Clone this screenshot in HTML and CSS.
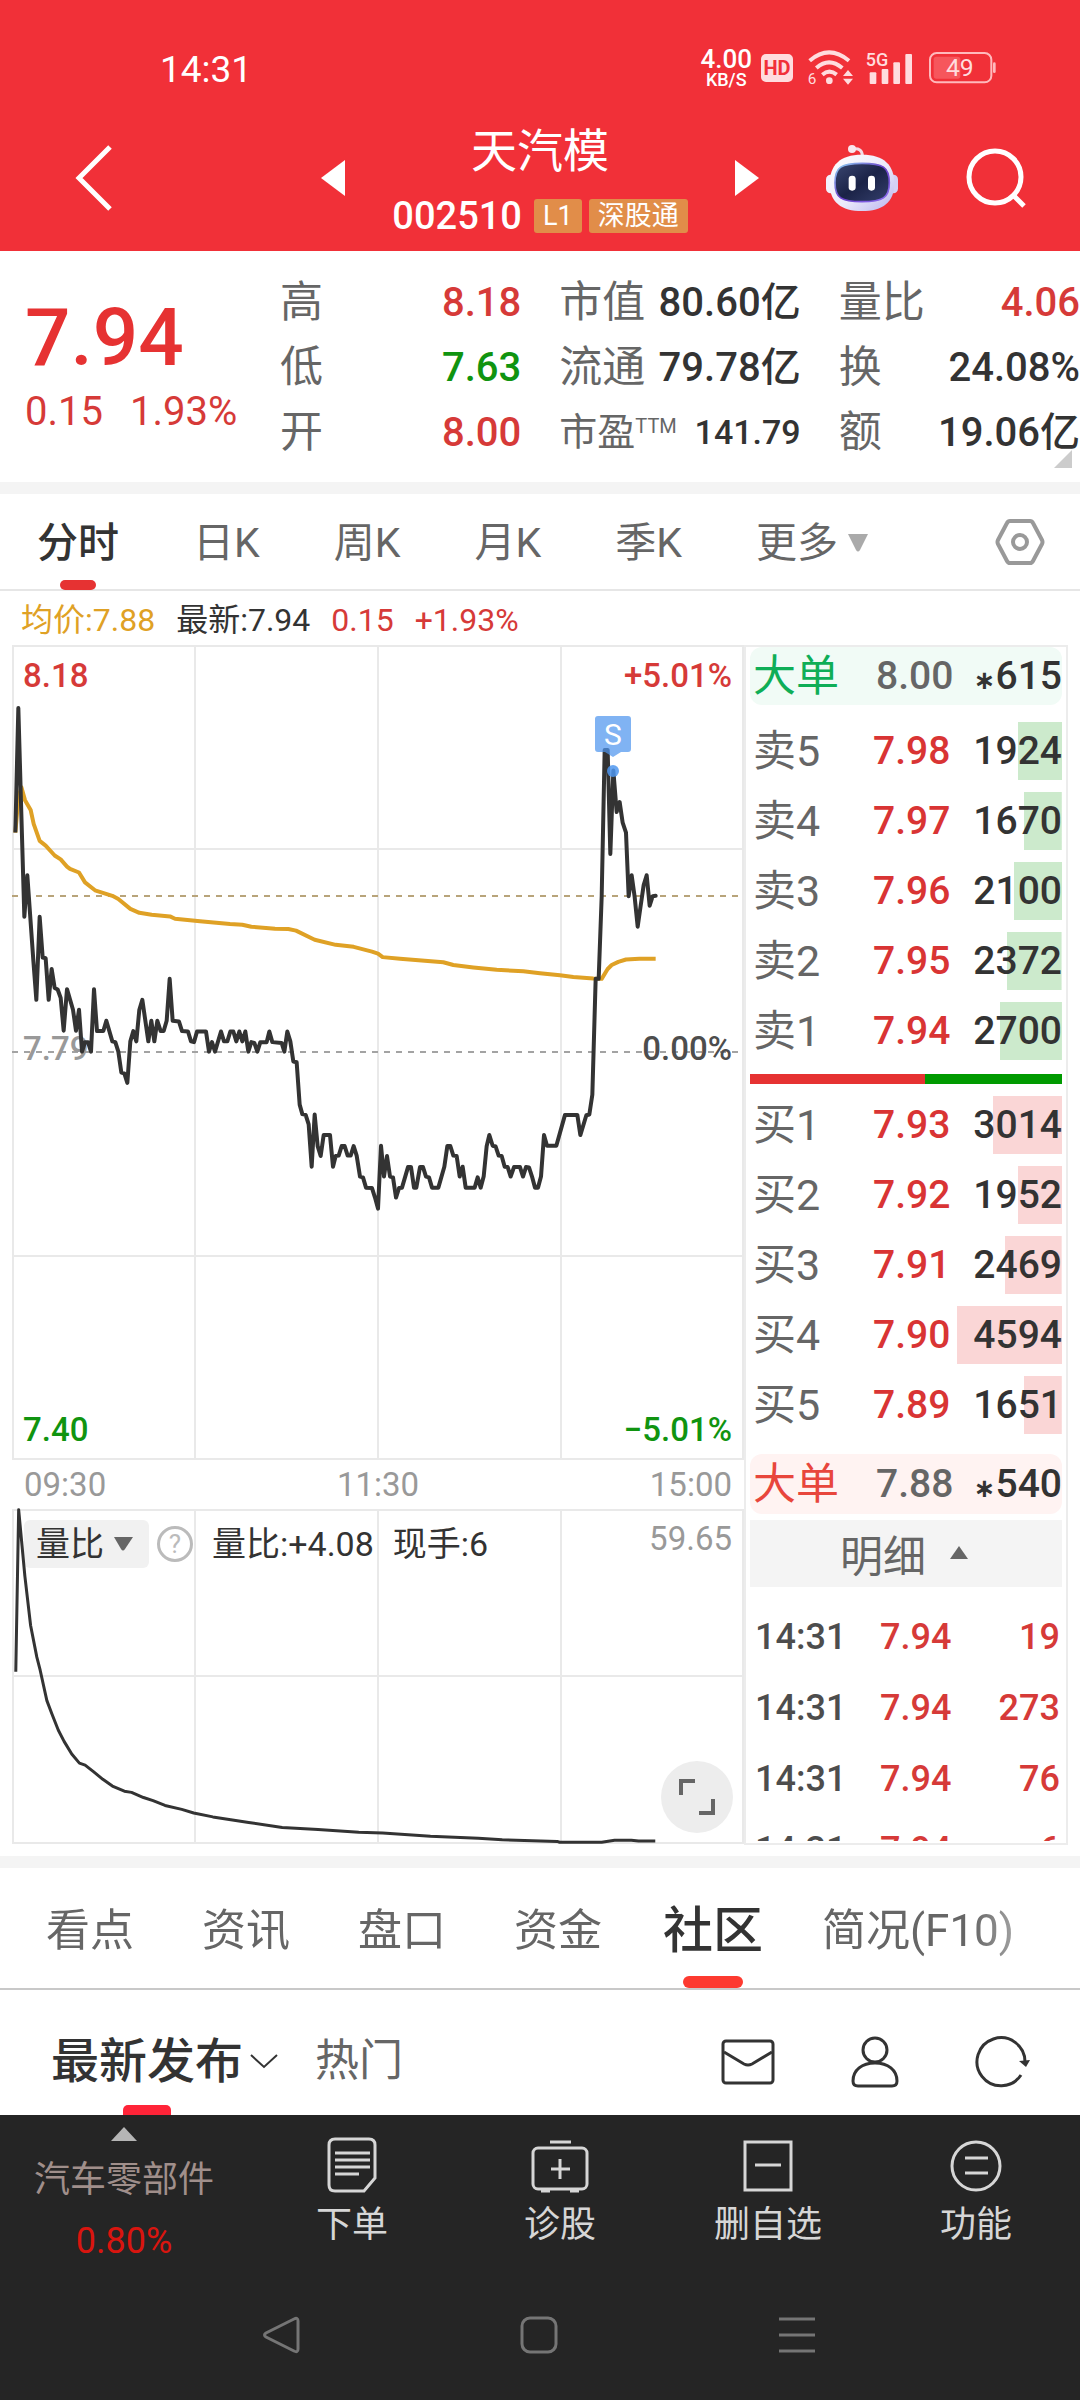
FILE: index.html
```html
<!DOCTYPE html>
<html lang="zh-CN">
<head>
<meta charset="utf-8">
<meta name="viewport" content="width=device-width">
<title>天汽模 002510</title>
<link rel="stylesheet" href="styles.css">
</head>
<body>
<header class="top">
  <div class="status">
    <span class="clock">14:31</span>
    <div class="status-icons">
      <span class="speed"><b>4.00</b><small>KB/S</small></span>
      <span class="hd">HD</span>
      <svg class="wifi" width="46" height="36" viewBox="0 0 138 108" fill="none" stroke="#ffdcde" stroke-width="12">
        <path d="M8 32Q66-18 126 32M28 54Q66 20 106 54M46 74Q67 56 89 74"/>
        <circle cx="67" cy="92" r="10" fill="#ffdcde" stroke="none"/>
        <path d="M108 78l15-18 15 18zM108 86l15 18 15-18z" fill="#ffdcde" stroke="none"/>
        <text x="2" y="103" font-size="46" fill="#ffdcde" stroke="none">6</text>
      </svg>
      <svg class="signal" width="48" height="34" viewBox="0 0 144 102" fill="#ffdcde">
        <rect x="11" y="64" width="20" height="35" rx="3"/><rect x="47" y="54" width="20" height="45" rx="3"/><rect x="82" y="34" width="20" height="65" rx="3"/><rect x="118" y="9" width="20" height="90" rx="3"/>
        <text x="-1" y="46" font-size="54" font-weight="500">5G</text>
      </svg>
      <svg class="battery" width="68" height="32" viewBox="0 0 204 96">
        <rect x="3" y="3" width="184" height="88" rx="20" fill="none" stroke="#ffb9bc" stroke-width="6"/>
        <rect x="14" y="14" width="80" height="66" rx="8" fill="#f6565c"/>
        <rect x="192" y="31" width="8" height="32" rx="4" fill="#ffb9bc"/>
        <text x="51" y="73" font-size="74" fill="#ffdcde">49</text>
      </svg>
    </div>
  </div>
  <div class="titlebar">
    <div class="side side-left">
      <button class="icon-btn" aria-label="返回"><svg width="38" height="66" viewBox="0 0 38 66" fill="none" stroke="#fff" stroke-width="5"><path d="M35 2L4 33l31 31"/></svg></button>
      <button class="icon-btn" aria-label="上一只"><svg width="24" height="36" viewBox="0 0 24 36"><path d="M24 0v36L0 18z" fill="#fff"/></svg></button>
    </div>
    <div class="stock">
      <h1>天汽模</h1>
      <p class="code"><span>002510</span><span class="tag">L1</span><span class="tag">深股通</span></p>
    </div>
    <div class="side side-right">
      <button class="icon-btn" aria-label="下一只"><svg width="24" height="36" viewBox="0 0 24 36"><path d="M0 0v36l24-18z" fill="#fff"/></svg></button>
      <button class="icon-btn" aria-label="智能助手">
        <svg width="74" height="68" viewBox="432 336 222 204">
          <defs>
            <linearGradient id="shell" x1="0" y1="0" x2="1" y2="1"><stop offset="0" stop-color="#fff"/><stop offset=".55" stop-color="#ebe9fa"/><stop offset="1" stop-color="#b9b4ee"/></linearGradient>
            <linearGradient id="face" x1="0" y1="0" x2="1" y2="1"><stop offset="0" stop-color="#3a4671"/><stop offset=".5" stop-color="#1b2347"/><stop offset="1" stop-color="#343f6c"/></linearGradient>
            <linearGradient id="rim" x1="0" y1="0" x2="1" y2="1"><stop offset="0" stop-color="#8fd6f5"/><stop offset=".5" stop-color="#6b3fc9"/><stop offset="1" stop-color="#8b6df0"/></linearGradient>
          </defs>
          <path d="M514 351Q544 346 544 372" fill="none" stroke="#f3dbe6" stroke-width="9"/>
          <circle cx="513" cy="351" r="12" fill="#f9e6ee"/>
          <rect x="435" y="428" width="30" height="56" rx="14" fill="#f2f0fc"/><rect x="621" y="428" width="30" height="56" rx="14" fill="#d5d0f4"/>
          <path d="M543 368C610 368 640 400 640 455C640 510 605 537 543 537C481 537 446 510 446 455C446 400 476 368 543 368Z" fill="url(#shell)"/>
          <path d="M543 394C605 394 625 405 625 452C625 498 605 509 543 509C481 509 462 498 462 452C462 405 481 394 543 394Z" fill="url(#face)" stroke="url(#rim)" stroke-width="5"/>
          <rect x="503" y="431" width="21" height="45" rx="10" fill="#fff"/><rect x="561" y="431" width="21" height="45" rx="10" fill="#fff"/>
        </svg>
      </button>
      <button class="icon-btn" aria-label="搜索"><svg width="62" height="62" viewBox="0 0 62 62" fill="none" stroke="#fff" stroke-width="5"><circle cx="30" cy="30" r="26"/><path d="M49 49l10 10"/></svg></button>
    </div>
  </div>
</header>

<main>
  <section class="quote">
    <div class="last">
      <strong>7.94</strong>
      <p><span>0.15</span><span>1.93%</span></p>
    </div>
    <dl class="stats">
      <div><dt>高</dt><dd class="up">8.18</dd></div>
      <div><dt>低</dt><dd class="down">7.63</dd></div>
      <div><dt>开</dt><dd class="up">8.00</dd></div>
    </dl>
    <dl class="stats">
      <div><dt>市值</dt><dd>80.60亿</dd></div>
      <div><dt>流通</dt><dd>79.78亿</dd></div>
      <div class="small"><dt>市盈<sup>TTM</sup></dt><dd>141.79</dd></div>
    </dl>
    <dl class="stats">
      <div><dt>量比</dt><dd class="up">4.06</dd></div>
      <div><dt>换</dt><dd>24.08%</dd></div>
      <div><dt>额</dt><dd>19.06亿</dd></div>
    </dl>
    <svg class="corner" width="18" height="18" viewBox="0 0 18 18"><path d="M18 0v18H0z" fill="#ccc"/></svg>
  </section>

  <nav class="periods">
    <a href="#" class="active">分时</a><a href="#">日K</a><a href="#">周K</a><a href="#">月K</a><a href="#">季K</a>
    <a href="#" class="more">更多<svg width="22" height="18" viewBox="0 0 22 18"><path d="M1 0h20L13 16q-2 3-4 0z" fill="#aaa"/></svg></a>
    <button class="icon-btn settings" aria-label="设置"><svg width="50" height="48" viewBox="0 0 50 48" fill="none" stroke="#999" stroke-width="4"><path d="M15 3h20q2 0 3 2l9 17q1 2 0 4l-9 17q-1 2-3 2H15q-2 0-3-2L3 26q-1-2 0-4l9-17q1-2 3-2z"/><circle cx="25" cy="24" r="7"/></svg></button>
  </nav>

  <p class="legend"><span class="avg">均价:7.88</span><span>最新:7.94</span><span class="up">0.15</span><span class="up">+1.93%</span></p>

  <div class="board">
    <div class="charts">
      <figure class="price-chart">
        <svg class="plot" viewBox="12 645 732 815" preserveAspectRatio="none" fill="none">
          <path d="M13 646H743V1459H13ZM195 646V1459M378 646V1459M561 646V1459M13 849H743M13 1256H743" stroke="#e9e9e9" stroke-width="2"/>
          <path d="M12 896H740" stroke="#b8a47a" stroke-width="2" stroke-dasharray="6 6"/>
          <path d="M12 1052H740" stroke="#a3a3a3" stroke-width="2" stroke-dasharray="6 6"/>
        </svg>
        <span class="lab tl up">8.18</span><span class="lab tr up">+5.01%</span>
        <span class="lab ml">7.79</span><span class="lab mr">0.00%</span>
        <span class="lab bl down">7.40</span><span class="lab br down">−5.01%</span>
        <svg class="plot over" viewBox="12 645 732 815" preserveAspectRatio="none" fill="none" stroke-linejoin="round">
          <g stroke="#dfa125" stroke-width="4">
            <polyline vector-effect="non-scaling-stroke" transform="translate(0 640) scale(.33333 .39541)" points="46,487 55,400 64,372 75,405 92,430 101,465 119,508 137,520 164,545 182,555 201,573 210,579 237,588 255,613 285,633 337,647 355,655 391,680 418,690 455,695 510,699 525,705 600,711 690,718 727,720 754,725 825,730 865,731 888,735 944,758 1007,771 1061,776 1116,788 1134,793 1148,802 1200,806 1330,815 1360,822 1420,828 1490,834 1570,838 1620,843 1680,848 1720,852 1780,856 1805,857 1823,832 1835,822 1855,814 1878,808 1918,806 1967,806"/>
          </g>
          <g stroke="#333" stroke-width="4">
            <polyline vector-effect="non-scaling-stroke" transform="translate(0 640) scale(.33333 .39541)" points="46,487 55,172 64,440 73,700 82,595 100,810 109,910 119,700 128,803 137,805 146,910 155,832 164,880 173,884 182,905 191,988 201,883 219,935 228,988 237,935 246,1041 255,1017 264,1017 273,1041 282,883 291,989 310,989 319,963 337,1015 346,1017 355,1041 364,1094 373,1096 382,1120 391,1015 400,989 409,1015 418,935 427,910 445,1015 454,963 463,1015 472,963 482,989 491,989 500,963 509,857 518,963 537,965 546,989 564,990 573,1015 582,1017 591,990 618,990 627,1041 636,1017 645,1041 663,990 672,1015 682,1015 691,990 700,990 709,1015 718,990 727,1015 736,990 745,1041 754,1017 763,1019 772,1041 781,1017 800,1017 808,990 817,1017 845,1019 853,1041 862,990 871,1015 880,1066 890,1068 899,1175 907,1199 917,1201 926,1225 935,1332 944,1200 953,1280 962,1305 971,1252 990,1252 999,1332 1007,1305 1016,1304 1025,1280 1034,1280 1043,1304 1052,1304 1061,1280 1070,1304 1080,1357 1089,1359 1098,1385 1116,1386 1125,1410 1134,1438 1143,1279 1152,1357 1161,1305 1170,1357 1179,1359 1188,1410"/>
            <polyline stroke-linecap="round" vector-effect="non-scaling-stroke" transform="translate(380 640) scale(.33333 .39541)" points="48,1410 57,1386 66,1385 84,1333 93,1333 102,1385 109,1385 120,1333 129,1333 138,1357 147,1359 156,1385 175,1385 193,1332 202,1280 211,1280 220,1304 230,1305 239,1357 248,1332 257,1385 284,1385 293,1359 302,1385 311,1357 320,1280 328,1252 338,1279 347,1281 356,1304 365,1305 374,1332 383,1333 392,1357 402,1333 420,1333 429,1357 438,1333 447,1334 456,1357 465,1385 474,1385 483,1357 492,1252 501,1279 529,1279 555,1201 592,1201 601,1252 619,1202 628,1200 637,1150 647,857 656,857 665,650 674,278 683,278 691,541 700,330 710,435 719,410 728,462 738,487 746,648 755,595 764,650 773,725 782,672 791,620 800,595 809,672 818,648 827,647"/>
          </g>
          <g fill="#4f96ee"><path fill-opacity=".72" d="M598 716H628Q631 716 631 719V749Q631 752 628 752H621L613 757L605 752H598Q595 752 595 749V719Q595 716 598 716Z"/><circle fill-opacity=".85" cx="613" cy="771" r="6"/></g>
          <text x="613" y="745" font-size="30" fill="#fff" text-anchor="middle">S</text>
        </svg>
      </figure>
      <div class="axis"><span>09:30</span><span>11:30</span><span>15:00</span></div>
      <figure class="ratio-chart">
        <svg class="plot" viewBox="12 1509 732 336" preserveAspectRatio="none" fill="none">
          <path d="M13 1510H743V1843H13ZM195 1510V1843M378 1510V1843M561 1510V1843M13 1676H743" stroke="#e9e9e9" stroke-width="2"/>
        </svg>
        <div class="ratio-head">
          <button class="picker">量比<svg width="19" height="14" viewBox="0 0 19 14"><path d="M0 0h19L11 12q-2 3-4 0z" fill="#666"/></svg></button>
          <button class="help" aria-label="说明">?</button>
          <span>量比:+4.08</span><span>现手:6</span><span class="max">59.65</span>
        </div>
        <svg class="plot over" viewBox="12 1509 732 336" preserveAspectRatio="none" fill="none">
          <polyline stroke="#333" stroke-width="3" stroke-linejoin="round" vector-effect="non-scaling-stroke" transform="translate(0 1240) scale(.4783 .39541)" points="33,1092 39,682 52,850 64,975 77,1055 84,1088 98,1165 109,1200 122,1240 134,1268 150,1300 166,1323 178,1328 196,1345 215,1364 235,1381 260,1394 275,1397 300,1410 320,1418 345,1430 380,1440 405,1449 445,1459 520,1473 590,1486 665,1491 750,1498 800,1500 900,1508 1000,1513 1050,1517 1165,1521 1170,1523 1258,1523 1285,1518 1320,1518 1335,1520 1370,1520"/>
        </svg>
        <button class="expand" aria-label="全屏"><svg width="36" height="36" viewBox="0 0 36 36" fill="none" stroke="#666" stroke-width="4"><path d="M2 16V2h14M34 20v14H20"/></svg></button>
      </figure>
    </div>

    <aside class="book">
      <div class="big big-sell"><b>大单</b><span>8.00</span><em><i class="star">∗</i>615</em></div>
      <table class="levels sell">
        <tr><th>卖5</th><td>7.98</td><td style="--w:42%">1924</td></tr>
        <tr><th>卖4</th><td>7.97</td><td style="--w:36%">1670</td></tr>
        <tr><th>卖3</th><td>7.96</td><td style="--w:46%">2100</td></tr>
        <tr><th>卖2</th><td>7.95</td><td style="--w:52%">2372</td></tr>
        <tr><th>卖1</th><td>7.94</td><td style="--w:59%">2700</td></tr>
      </table>
      <div class="balance"><i style="width:56%"></i></div>
      <table class="levels buy">
        <tr><th>买1</th><td>7.93</td><td style="--w:66%">3014</td></tr>
        <tr><th>买2</th><td>7.92</td><td style="--w:42%">1952</td></tr>
        <tr><th>买3</th><td>7.91</td><td style="--w:54%">2469</td></tr>
        <tr><th>买4</th><td>7.90</td><td style="--w:100%">4594</td></tr>
        <tr><th>买5</th><td>7.89</td><td style="--w:36%">1651</td></tr>
      </table>
      <div class="big big-buy"><b>大单</b><span>7.88</span><em><i class="star">∗</i>540</em></div>
      <button class="detail">明细<svg width="18" height="13" viewBox="0 0 18 13"><path d="M9 0l9 13H0z" fill="#666"/></svg></button>
      <div class="ticks-clip">
        <table class="ticks">
          <tr><th>14:31</th><td>7.94</td><td>19</td></tr>
          <tr><th>14:31</th><td>7.94</td><td>273</td></tr>
          <tr><th>14:31</th><td>7.94</td><td>76</td></tr>
          <tr><th>14:31</th><td>7.94</td><td>6</td></tr>
        </table>
      </div>
    </aside>
  </div>

  <nav class="sections">
    <div class="sections-row">
      <a href="#">看点</a><a href="#">资讯</a><a href="#">盘口</a><a href="#">资金</a><a href="#" class="active">社区</a><a href="#">简况(F10)</a>
    </div>
  </nav>

  <div class="feed">
    <a href="#" class="active">最新发布</a>
    <svg class="caret" width="28" height="14" viewBox="0 0 28 14" fill="none" stroke="#333" stroke-width="2"><path d="M1 1l13 12L27 1"/></svg>
    <a href="#">热门</a>
    <div class="feed-tools">
      <button class="icon-btn" aria-label="消息"><svg width="54" height="46" viewBox="0 0 54 46" fill="none" stroke="#333" stroke-width="3"><rect x="2" y="2" width="50" height="42" rx="3"/><path d="M3 13l20 12q4 2 8 0l20-12"/></svg></button>
      <button class="icon-btn" aria-label="我的"><svg width="48" height="52" viewBox="0 0 48 52" fill="none" stroke="#333" stroke-width="3"><circle cx="24" cy="14" r="12"/><path d="M24 27C11 27 2 34 2 45Q2 50 7 50H41Q46 50 46 45C46 34 37 27 24 27Z"/></svg></button>
      <button class="icon-btn" aria-label="刷新"><svg width="56" height="52" viewBox="0 0 56 52" fill="none" stroke="#333" stroke-width="3"><path d="M46 39A24 24 0 1 1 50 26"/><path d="M44 25l11-1-4 7z" fill="#333" stroke="none"/></svg></button>
    </div>
  </div>
</main>

<footer class="bottom">
  <div class="actions">
    <a href="#" class="sector"><svg width="26" height="14" viewBox="0 0 26 14"><path d="M13 0l13 14H0z" fill="#b5b5b5"/></svg><span>汽车零部件</span><em>0.80%</em></a>
    <button><svg width="56" height="56" viewBox="0 0 56 56" fill="none" stroke="#d6d6d6" stroke-width="3"><path d="M11 2H45Q51 2 51 8V41L40 54H11Q5 54 5 48V8Q5 2 11 2Z"/><path d="M11 16H46M11 23H46M11 30H46M11 37H35"/></svg>下单</button>
    <button><svg width="60" height="56" viewBox="0 0 60 56" fill="none" stroke="#d6d6d6" stroke-width="3"><rect x="3" y="11" width="54" height="41" rx="5"/><path d="M20 5h21M11 54h9M40 54h9M21 32h19M30 22v20"/></svg>诊股</button>
    <button><svg width="56" height="56" viewBox="0 0 56 56" fill="none" stroke="#d6d6d6" stroke-width="3"><rect x="5" y="5" width="46" height="48"/><path d="M15 28h26"/></svg>删自选</button>
    <button><svg width="56" height="56" viewBox="0 0 56 56" fill="none" stroke="#d6d6d6" stroke-width="3"><circle cx="28" cy="29" r="24"/><path d="M17 21h23M17 36h23"/></svg>功能</button>
  </div>
  <div class="sysnav">
    <button aria-label="返回"><svg width="38" height="38" viewBox="0 0 38 38" fill="none" stroke="#757575" stroke-width="3"><path d="M32 3Q36 1 36 5V33Q36 37 32 35L4 21Q1 19 4 17Z"/></svg></button>
    <button aria-label="主页"><svg width="38" height="38" viewBox="0 0 38 38" fill="none" stroke="#757575" stroke-width="3"><rect x="2" y="2" width="34" height="34" rx="8"/></svg></button>
    <button aria-label="任务"><svg width="38" height="38" viewBox="0 0 38 38" stroke="#757575" stroke-width="3"><path d="M1 3h36M1 19h36M1 35h36"/></svg></button>
  </div>
</footer>
</body>
</html>
```
FILE: styles.css
```css
* { box-sizing: border-box; }
body, h1, p, dl, dd, figure { margin: 0; }
body {
  font-family: Roboto, "Noto Sans CJK SC", sans-serif;
  color: #333;
  background: #fff;
}
a { color: inherit; text-decoration: none; }
em, i { font-style: normal; }
button { font: inherit; color: inherit; background: none; border: 0; padding: 0; }
svg { display: block; flex: none; overflow: visible; }
text { font-family: Roboto, sans-serif; }
.icon-btn { display: flex; }
.up { color: #d63a38; }
.down { color: #109410; }

/* header */
.top { background: #f13038; color: #fff; }
.status { display: flex; justify-content: space-between; align-items: center; height: 100px; padding: 36px 83px 0 160px; }
.clock { font-size: 37px; line-height: 40px; padding-top: 3px; }
.status-icons { display: flex; align-items: center; }
.speed { display: grid; justify-items: center; font-weight: 500; margin-right: 9px; }
.speed b { font-size: 26px; line-height: 24px; font-weight: 500; }
.speed small { font-size: 18px; line-height: 18px; }
.hd { background: #ffdcde; color: #f13038; border-radius: 5px; width: 32px; height: 28px; font-size: 20px; line-height: 28px; font-weight: 700; text-align: center; }
.wifi { margin: 0 13px 0 14px; }
.signal { margin-right: 15px; }
.titlebar { display: grid; grid-template-columns: 1fr 390px 1fr; height: 151px; }
.side { display: flex; align-items: center; padding-top: 5px; }
.side-left { justify-content: space-between; padding-left: 75px; }
.side-right { gap: 66px; }
.stock { display: grid; justify-items: center; align-content: start; padding-top: 19px; }
.stock h1 { font-size: 46px; line-height: 64px; font-weight: 400; }
.code { display: flex; align-items: center; gap: 7px; font-size: 38px; line-height: 66px; font-weight: 500; }
.code span:first-child { margin-right: 5px; }
.tag { background: #e18d49; border-radius: 3px; padding: 0 9px; height: 34px; font-size: 27px; line-height: 34px; font-weight: 400; }

/* quote */
.quote { position: relative; display: grid; grid-template-columns: 217px 1fr 1fr 1fr; column-gap: 38px; padding: 19px 0 17px 25px; border-bottom: 12px solid #f4f4f4; }
.last { color: #e63232; padding-top: 28px; white-space: nowrap; }
.last strong { display: block; font-size: 80px; line-height: 80px; font-weight: 500; }
.last p { display: flex; gap: 27px; font-size: 40px; line-height: 68px; color: #d63a38; }
.stats div { display: flex; justify-content: space-between; height: 65px; line-height: 65px; font-size: 43px; white-space: nowrap; }
.stats dt { color: #666; }
.stats dd { font-size: 40px; font-weight: 500; }
.stats .small { font-size: 38px; }
.stats .small dd { font-size: 34px; }
.stats sup { font-size: 20px; line-height: 20px; vertical-align: 12px; }
.corner { position: absolute; right: 8px; bottom: 14px; }

/* period tabs */
.periods { display: flex; align-items: center; gap: 74px; height: 97px; padding: 0 35px 0 37px; font-size: 41px; line-height: 94px; color: #666; border-bottom: 2px solid #e6e6e6; }
.periods a { padding-top: 2px; }
.periods .active, .sections .active, .feed .active { position: relative; color: #333; font-weight: 500; }
.active::after { content: ""; position: absolute; bottom: 0; left: 50%; transform: translateX(-50%); width: 36px; height: 10px; border-radius: 5px; background: #e63232; }
.more { display: flex; align-items: center; gap: 9px; }
.settings { margin-left: auto; }
.legend { display: flex; gap: 21px; padding: 4px 21px 0; font-size: 32px; line-height: 50px; }
.avg { color: #dfa125; }

/* charts */
.board { display: grid; grid-template-columns: 1fr 324px; padding: 0 12px 11px; border-bottom: 12px solid #f4f4f4; }
.price-chart, .ratio-chart { position: relative; }
.plot { width: 100%; height: 815px; }
.ratio-chart .plot { height: 336px; }
.over { position: absolute; inset: 0; pointer-events: none; }
.lab { position: absolute; font-size: 33px; line-height: 40px; font-weight: 500; }
.tl, .ml, .bl { left: 11px; }
.tr, .mr, .br { right: 12px; }
.tl, .tr { top: 11px; }
.ml, .mr { top: 384px; }
.bl, .br { bottom: 10px; }
.ml { color: #999; }
.mr { color: #4d4d4d; }
.axis { display: grid; grid-template-columns: 1fr 1fr 1fr; padding: 0 12px; font-size: 33px; line-height: 49px; color: #999; }
.axis span:nth-child(2) { text-align: center; }
.axis span:nth-child(3) { text-align: right; }
.ratio-head { position: absolute; inset: 11px 12px auto; display: flex; align-items: center; gap: 19px; height: 48px; font-size: 34px; line-height: 50px; }
.picker { display: flex; align-items: center; gap: 10px; height: 48px; padding: 0 16px 0 12px; border-radius: 6px; background: #f1f1f1; margin-right: -11px; }
.help { width: 36px; height: 36px; border: 3px solid #bbb; border-radius: 50%; font-size: 26px; line-height: 28px; color: #bbb; }
.max { margin: -10px 0 0 auto; font-size: 33px; color: #999; }
.expand { position: absolute; right: 11px; bottom: 12px; display: grid; place-items: center; width: 72px; height: 72px; border-radius: 50%; background: #ededed; }

/* order book */
.book { border: 2px solid #ececec; padding: 0 4px; display: flex; flex-direction: column; }
.big { display: grid; grid-template-columns: 123px 83px 1fr; align-items: center; height: 58px; padding-left: 3px; border-radius: 12px; font-size: 39px; line-height: 56px; font-weight: 500; flex: none; }
.big b { font-size: 43px; font-weight: 400; }
.big span { color: #666; }
.big em { text-align: right; }
.star { font: 700 26px/40px "DejaVu Sans", sans-serif; }
.big-sell { background: #f1fbf6; margin-bottom: 11px; }
.big-sell b { color: #0fae57; }
.big-buy { background: #fff3f2; margin: 14px 0 6px; height: 60px; }
.big-buy b { color: #e8463c; }
table { width: 100%; border-collapse: collapse; table-layout: fixed; }
th, td { padding: 0; text-align: left; white-space: nowrap; }
.levels tr { height: 70px; }
.levels th { width: 123px; padding-left: 3px; font-size: 43px; font-weight: 400; color: #666; line-height: 60px; }
.levels td { font-size: 39px; font-weight: 500; line-height: 60px; color: #d93434; }
.levels td:last-child { width: 105px; text-align: right; color: #333; background: linear-gradient(var(--bar), var(--bar)) no-repeat right center / var(--w) 58px; }
.sell { --bar: #cceacc; }
.buy { --bar: #fad6d6; }
.balance { flex: none; display: flex; height: 10px; margin: 8px 0 6px; background: #009a00; }
.balance i { background: #e63232; }
.detail { flex: none; display: flex; align-items: center; justify-content: center; gap: 24px; height: 67px; padding: 0 4px 2px 0; background: #f4f4f4; color: #666; font-size: 43px; }
.ticks-clip { margin-top: 14px; height: 240px; overflow: hidden; }
.ticks tr { height: 71px; }
.ticks th, .ticks td { font-size: 36px; line-height: 40px; font-weight: 500; }
.ticks th { width: 130px; padding-left: 5px; color: #4d4d4d; }
.ticks td { color: #d63a38; }
.ticks td:last-child { width: 90px; padding-right: 2px; text-align: right; }

/* section tabs */
.sections { border-bottom: 2px solid #c8c8c8; }
.sections-row { display: flex; gap: 68px; height: 120px; padding-left: 46px; font-size: 44px; line-height: 120px; color: #666; white-space: nowrap; -webkit-mask-image: linear-gradient(to right, #000 90%, transparent); mask-image: linear-gradient(to right, #000 90%, transparent); }
.sections-row a { padding-top: 3px; height: 120px; }
.sections .active { font-size: 50px; margin: 0 -9px 0 -7px; }
.sections .active::after { width: 60px; height: 12px; border-radius: 6px; background: #fd3a30; }
.feed { display: flex; align-items: center; height: 125px; padding: 0 49px 0 51px; font-size: 44px; line-height: 107px; color: #666; }
.feed a { padding-top: 18px; height: 125px; }
.feed .active { font-size: 48px; }
.feed .active::after { width: 48px; background: #ff2438; border-radius: 5px 5px 0 0; }
.caret { margin: 16px 37px 0 7px; }
.feed-tools { display: flex; align-items: center; gap: 76px; margin-left: auto; padding-top: 18px; }

/* footer */
.bottom { background: #252525; color: #d6d6d6; padding-bottom: 46px; }
.actions { display: grid; grid-template-columns: 248px repeat(4, 1fr); font-size: 36px; }
.actions button { display: grid; justify-items: center; align-content: start; padding-top: 22px; line-height: 65px; }
.sector { display: grid; justify-items: center; align-content: start; padding-top: 12px; color: #a08f8b; line-height: 61px; }
.sector span { margin-top: 9px; }
.sector em { color: #d9150f; }
.sysnav { display: flex; justify-content: center; gap: 220px; padding: 44px 2px 0 0; }
```
